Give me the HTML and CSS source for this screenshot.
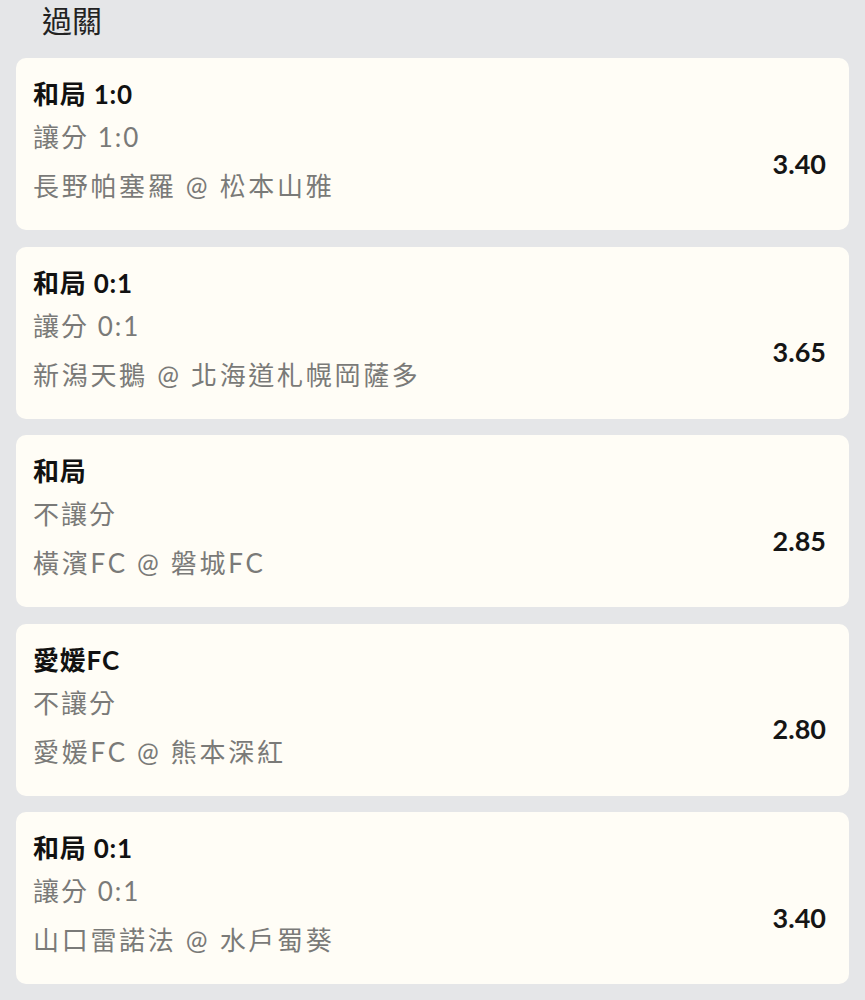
FILE: index.html
```html
<!DOCTYPE html>
<html lang="zh-Hant">
<head>
<meta charset="utf-8">
<title>過關</title>
<link rel="stylesheet" href="styles.css">
</head>
<body>
<div class="page">
  <h1 class="heading">過關</h1>
  <div class="list">
    <div class="card">
      <div class="info">
        <div class="title">和局 1:0</div>
        <div class="sub">讓分 1:0</div>
        <div class="match">長野帕塞羅 @ 松本山雅</div>
      </div>
      <div class="odds">3.40</div>
    </div>
    <div class="card">
      <div class="info">
        <div class="title">和局 0:1</div>
        <div class="sub">讓分 0:1</div>
        <div class="match">新潟天鵝 @ 北海道札幌岡薩多</div>
      </div>
      <div class="odds">3.65</div>
    </div>
    <div class="card">
      <div class="info">
        <div class="title">和局</div>
        <div class="sub">不讓分</div>
        <div class="match">橫濱FC @ 磐城FC</div>
      </div>
      <div class="odds">2.85</div>
    </div>
    <div class="card">
      <div class="info">
        <div class="title">愛媛FC</div>
        <div class="sub">不讓分</div>
        <div class="match">愛媛FC @ 熊本深紅</div>
      </div>
      <div class="odds">2.80</div>
    </div>
    <div class="card">
      <div class="info">
        <div class="title">和局 0:1</div>
        <div class="sub">讓分 0:1</div>
        <div class="match">山口雷諾法 @ 水戶蜀葵</div>
      </div>
      <div class="odds">3.40</div>
    </div>
  </div>
</div>
</body>
</html>
```
FILE: styles.css
```css
html, body {
  margin: 0;
  padding: 0;
  background: #e5e6e8;
}
body {
  font-family: Lato, "Noto Sans CJK TC", sans-serif;
  color: #111;
}
.page {
  padding: 0 16px;
}
.heading {
  margin: 0 0 21px 26px;
  padding-top: 1px;
  font-family: "Noto Sans CJK TC", sans-serif;
  font-weight: 400;
  font-size: 30px;
  line-height: 36px;
  color: #222;
}
.list {
  display: flex;
  flex-direction: column;
  gap: 16.5px;
}
.card {
  height: 172px;
  box-sizing: border-box;
  background: #fffdf6;
  border-radius: 10px;
  padding: 19px 23px 27px 17px;
  display: flex;
  align-items: center;
  justify-content: space-between;
}
.info {
  display: flex;
  flex-direction: column;
  align-self: flex-start;
}
.title {
  font-size: 26px;
  line-height: 34px;
  font-weight: 700;
  letter-spacing: 0.8px;
  color: #111;
}
.sub {
  margin-top: 9px;
  font-size: 26px;
  line-height: 34px;
  letter-spacing: 2px;
  color: #7a7a78;
}
.match {
  margin-top: 15px;
  font-size: 26px;
  line-height: 34px;
  letter-spacing: 2.7px;
  color: #7a7a78;
}
.odds {
  font-size: 27px;
  font-weight: 700;
  color: #151515;
  margin-top: 46px;
}
```
